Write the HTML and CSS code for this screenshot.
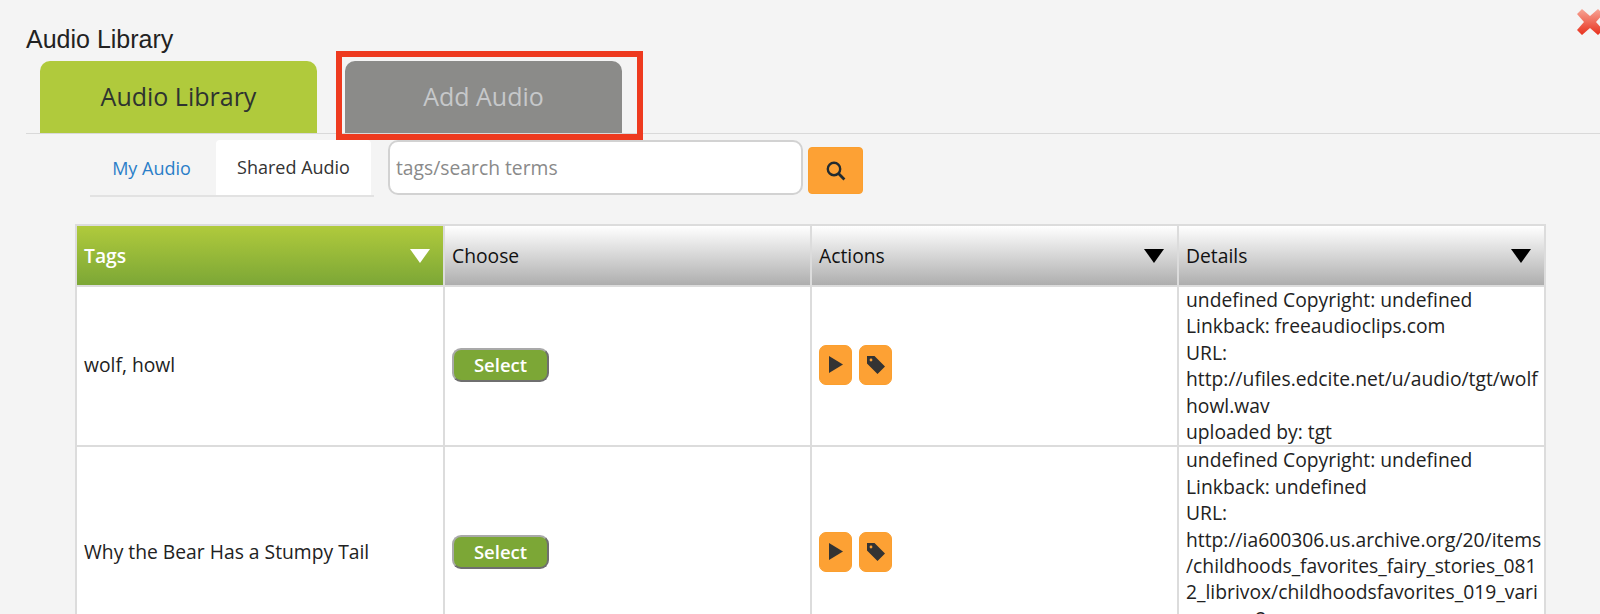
FILE: index.html
```html
<!DOCTYPE html>
<html lang="en">
<head>
    <meta charset="UTF-8">
    <title>Audio Library</title>
    <link rel="stylesheet" href="styles.css">
</head>
<body>

<svg class="close-icon" viewBox="0 0 28 28">
    <defs>
        <linearGradient id="close-fill" x1="0" y1="0" x2="0" y2="1">
            <stop offset="0" stop-color="#f7a596"/>
            <stop offset="1" stop-color="#e8301c"/>
        </linearGradient>
    </defs>
    <path d="M6 1 L14 8 L22 1 L27 6 L20 14 L27 22 L22 27 L14 20 L6 27 L1 22 L8 14 L1 6 Z" fill="url(#close-fill)"/>
</svg>

<h1 class="title">Audio Library</h1>

<div class="main-tabs">
    <div class="main-tab active">Audio Library</div>
    <div class="main-tab muted">Add Audio</div>
</div>

<div class="toolbar">
    <div class="sub-tabs">
        <a class="sub-tab">My Audio</a>
        <a class="sub-tab current">Shared Audio</a>
    </div>
    <input class="search-input" type="text" placeholder="tags/search terms">
    <button class="search-btn">
        <svg viewBox="0 0 20 20" width="20" height="20">
            <circle cx="8" cy="8" r="6.2" fill="none" stroke="#222b30" stroke-width="2.4"/>
            <path d="M12.5 12.5 L18.4 18.4" stroke="#222b30" stroke-width="2.8"/>
        </svg>
    </button>
</div>

<table class="audio-table">
    <thead>
        <tr>
            <th class="sorted"><div class="th-inner">Tags <span class="arrow"></span></div></th>
            <th><div class="th-inner">Choose</div></th>
            <th><div class="th-inner">Actions <span class="arrow"></span></div></th>
            <th><div class="th-inner">Details <span class="arrow"></span></div></th>
        </tr>
    </thead>
    <tbody>
        <tr>
            <td>wolf, howl</td>
            <td><button class="select-btn">Select</button></td>
            <td>
                <div class="actions">
                    <button class="icon-btn"><svg viewBox="0 0 14 17" width="14" height="17"><path d="M0 0 L14 8.5 L0 17 Z" fill="#333"/></svg></button>
                    <button class="icon-btn"><svg viewBox="0 0 20 20" width="20" height="20"><path fill-rule="evenodd" d="M1 1 H8.5 L19 11.5 L11.5 19 L1 8.5 Z M5 3.6 A1.4 1.4 0 1 0 5 6.4 A1.4 1.4 0 1 0 5 3.6 Z" fill="#333"/></svg></button>
                </div>
            </td>
            <td class="details">undefined Copyright: undefined<br>Linkback: freeaudioclips.com<br>URL:<br>http://ufiles.edcite.net/u/audio/tgt/wolf howl.wav<br>uploaded by: tgt</td>
        </tr>
        <tr>
            <td>Why the Bear Has a Stumpy Tail</td>
            <td><button class="select-btn">Select</button></td>
            <td>
                <div class="actions">
                    <button class="icon-btn"><svg viewBox="0 0 14 17" width="14" height="17"><path d="M0 0 L14 8.5 L0 17 Z" fill="#333"/></svg></button>
                    <button class="icon-btn"><svg viewBox="0 0 20 20" width="20" height="20"><path fill-rule="evenodd" d="M1 1 H8.5 L19 11.5 L11.5 19 L1 8.5 Z M5 3.6 A1.4 1.4 0 1 0 5 6.4 A1.4 1.4 0 1 0 5 3.6 Z" fill="#333"/></svg></button>
                </div>
            </td>
            <td class="details">undefined Copyright: undefined<br>Linkback: undefined<br>URL:<br>http://ia600306.us.archive.org/20/items /childhoods_favorites_fairy_stories_0812_librivox/childhoodsfavorites_019_various_rev2.wav<br>uploaded by: tgt</td>
        </tr>
    </tbody>
</table>

</body>
</html>
```

FILE: styles.css
```css
body {
    font-family: "Open Sans", sans-serif;
    background-color: #f4f4f4;
    margin: 0;
    height: 614px;
    overflow: hidden;
    position: relative;
}

.close-icon {
    position: absolute;
    top: 8px;
    left: 1576px;
    width: 28px;
    height: 28px;
}

.title {
    font-family: "Liberation Sans", Arial, sans-serif;
    font-size: 25px;
    font-weight: normal;
    line-height: 26px;
    color: #222;
    margin: 0;
    padding: 26px 0 0 26px;
    height: 35px;
}

.main-tabs {
    display: flex;
    gap: 28px;
    margin-left: 26px;
    padding-left: 14px;
    height: 72px;
    border-bottom: 1px solid #d9d9d9;
}

.main-tab {
    width: 277px;
    height: 72px;
    border-radius: 10px 10px 0 0;
    font-size: 25px;
    line-height: 70px;
    text-align: center;
}

.main-tab.active {
    background-color: #b0ca3c;
    color: #2e3330;
}

.main-tab.muted {
    background-color: #8b8b89;
    color: #c6c8ca;
    position: relative;
}

/* red annotation box drawn over the second tab */
.main-tab.muted::after {
    content: "";
    position: absolute;
    top: -10px;
    left: -9px;
    right: -21px;
    bottom: -7px;
    border: 6px solid #ee3a1f;
}

.toolbar {
    display: flex;
    align-items: flex-start;
    height: 84px;
    padding: 6px 0 0 90px;
}

.sub-tabs {
    display: flex;
    width: 284px;
    height: 55px;
    border-bottom: 2px solid #e2e2e2;
}

.sub-tab {
    font-size: 18px;
    line-height: 56px;
}

.sub-tab:first-child {
    color: #2a7ec8;
    box-sizing: border-box;
    width: 126px;
    padding-right: 3px;
    text-align: center;
}

.sub-tab.current {
    background-color: #fff;
    color: #333;
    width: 155px;
    text-align: center;
    border-radius: 4px 4px 0 0;
    line-height: 54px;
}

.search-input {
    box-sizing: border-box;
    width: 415px;
    height: 55px;
    margin-left: 14px;
    padding: 0 6px;
    border: 2px solid #d2d2d2;
    border-radius: 10px;
    background-color: #fff;
    font-family: "Open Sans", sans-serif;
    font-size: 19.3px;
}

.search-input::placeholder {
    color: #8a8a8a;
}

.search-btn {
    width: 55px;
    height: 47px;
    margin: 7px 0 0 5px;
    padding: 0;
    border: 1px solid #fb9f2e;
    border-radius: 4px;
    background-color: #fda134;
    display: flex;
    align-items: center;
    justify-content: center;
}

.audio-table {
    width: 1471px;
    margin-left: 75px;
    border-collapse: collapse;
    table-layout: fixed;
    font-size: 19.3px;
    color: #222;
}

.audio-table th, .audio-table td {
    border: 2px solid #dcdcdc;
    padding: 0 7px;
    text-align: left;
    font-weight: normal;
}

.audio-table th:first-child {
    width: 368px;
    box-sizing: border-box;
}

.audio-table th {
    height: 59px;
    color: #111;
    background: linear-gradient(#ffffff, #aeaeae);
}

.audio-table th.sorted {
    background: linear-gradient(#b0ca3c, #7ca736);
    color: #fff;
    font-weight: 600;
}

.th-inner {
    display: flex;
    align-items: center;
    justify-content: space-between;
    padding-right: 6px;
}

.arrow {
    width: 0;
    height: 0;
    border-left: 10px solid transparent;
    border-right: 10px solid transparent;
    border-top: 14px solid #000;
}

.sorted .arrow {
    border-top-color: #fff;
}

.audio-table td {
    background-color: #fff;
    vertical-align: middle;
    padding-bottom: 3px;
}

.audio-table td.details {
    line-height: 26.4px;
    word-break: break-all;
    padding-right: 1px;
    padding-bottom: 0;
}

.select-btn {
    width: 97px;
    height: 34px;
    padding: 0;
    border: 2px solid #a9a9a9;
    border-right-color: #6f6f6f;
    border-bottom-color: #6f6f6f;
    border-radius: 9px;
    background-color: #7ca736;
    color: #fff;
    font-family: "Open Sans", sans-serif;
    font-size: 18.5px;
    font-weight: 600;
}

.actions {
    display: flex;
    gap: 7px;
}

.icon-btn {
    width: 33px;
    height: 40px;
    padding: 0;
    border: 1px solid #fb9f2e;
    border-radius: 7px;
    background-color: #fda134;
    display: flex;
    align-items: center;
    justify-content: center;
}
```
